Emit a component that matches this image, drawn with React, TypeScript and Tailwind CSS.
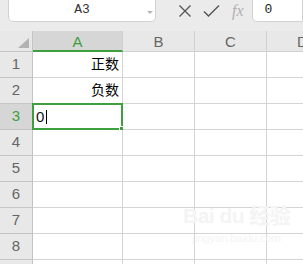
import React from "react";

const cols = ["A", "B", "C", "D"];
const rows = [1, 2, 3, 4, 5, 6, 7, 8, 9];
const data: Record<string, string> = { A1: "正数", A2: "负数" };

export default function App() {
  return (
    <div className="relative w-[303px] h-[264px] overflow-hidden bg-white font-['Liberation_Sans','Noto_Sans_CJK_SC',sans-serif]">
      {/* formula bar */}
      <div className="h-[31px] bg-[#ebebeb] flex items-start">
        <div className="ml-[8px] -mt-[4px] w-[148px] h-[26px] bg-white border border-[#d2d2d2] rounded-[5px] flex items-end pb-[2px] relative">
          <span className="flex-1 text-center font-['Liberation_Mono',monospace] text-[13px] text-[#333] leading-[18px]">A3</span>
          <span className="absolute right-[2px] top-[14px] w-0 h-0 border-x-[3px] border-x-transparent border-t-[3px] border-t-[#b5b5b5]" />
        </div>
        <div className="flex items-center h-[22px] ml-[22px] gap-[11px] text-[#555]">
          <svg width="14" height="12" viewBox="0 0 14 12" fill="none" stroke="currentColor" strokeWidth="1.3">
            <path d="M1.5 0.5 L12.5 11.5 M12.5 0.5 L1.5 11.5" />
          </svg>
          <svg width="17" height="12" viewBox="0 0 17 12" fill="none" stroke="currentColor" strokeWidth="1.4">
            <path d="M1 6.5 L5.5 11 L16 0.5" />
          </svg>
          <span className="ml-[1px] font-['Liberation_Serif',serif] italic text-[16px] text-[#b0b0b0] leading-none">fx</span>
        </div>
        <div className="ml-[8px] -mt-[4px] flex-1 h-[26px] bg-white border border-[#d2d2d2] rounded-l-[5px] flex items-end pb-[2px] pl-[12px]">
          <span className="font-['Liberation_Mono',monospace] text-[13px] text-[#222] leading-[18px]">0</span>
        </div>
      </div>

      {/* grid */}
      <div className="grid grid-cols-[33px_90px_72px_72px_72px] text-[15px]">
        <div className="h-[21px] bg-[#e8e8e8] border-r border-b border-[#c4c4c4] relative">
          <span className="absolute left-[18px] bottom-[3px] w-0 h-0 border-l-[11px] border-l-transparent border-b-[10px] border-b-[#b3b3b3]" />
        </div>
        {cols.map((c) => (
          <div
            key={c}
            className={
              c === "A"
                ? "h-[21px] bg-[#d6d6d6] border-r border-[#cfcfcf] border-b-2 border-b-[#3d9f3d] flex items-center justify-center text-[#3d9f3d] leading-none pt-[1px]"
                : "h-[21px] bg-[#e8e8e8] border-r border-b border-[#d0d0d0] flex items-center justify-center text-[#666] leading-none"
            }
          >
            {c}
          </div>
        ))}

        {rows.map((r) => (
          <React.Fragment key={r}>
            <div
              className={
                r === 3
                  ? "h-[26px] bg-[#d6d6d6] border-r border-b border-[#c4c4c4] flex items-center justify-center text-[#3d9f3d]"
                  : "h-[26px] bg-[#e8e8e8] border-r border-b border-[#c4c4c4] flex items-center justify-center text-[#666]"
              }
            >
              {r}
            </div>
            {cols.map((c) => {
              const id = c + r;
              const selected = id === "A3";
              return (
                <div key={id} className="relative h-[26px] border-r border-b border-[#d4d4d4] flex items-center justify-end pr-[3px] text-[14px] text-black">
                  {data[id]}
                  {selected && (
                    <div className="absolute -left-[1px] -top-[1px] w-[91px] h-[27px] border-2 border-[#3d9f3d] flex items-center pl-[2px]">
                      <span className="text-[15px] text-[#111] leading-none">0</span>
                      <span className="ml-[2px] w-px h-[14px] bg-black" />
                      <span className="absolute -right-[3px] -bottom-[3px] w-[5px] h-[5px] bg-[#3d9f3d] border border-white" />
                    </div>
                  )}
                </div>
              );
            })}
          </React.Fragment>
        ))}
      </div>

      {/* watermark */}
      <div className="absolute left-[183px] top-[205px] flex flex-col items-center text-[#f4f4f4] pointer-events-none">
        <span className="text-[21px] font-bold leading-none tracking-tight">Bai du 经验</span>
        <span className="text-[11px] leading-none mt-[7px]">jingyan.baidu.com</span>
      </div>
    </div>
  );
}
